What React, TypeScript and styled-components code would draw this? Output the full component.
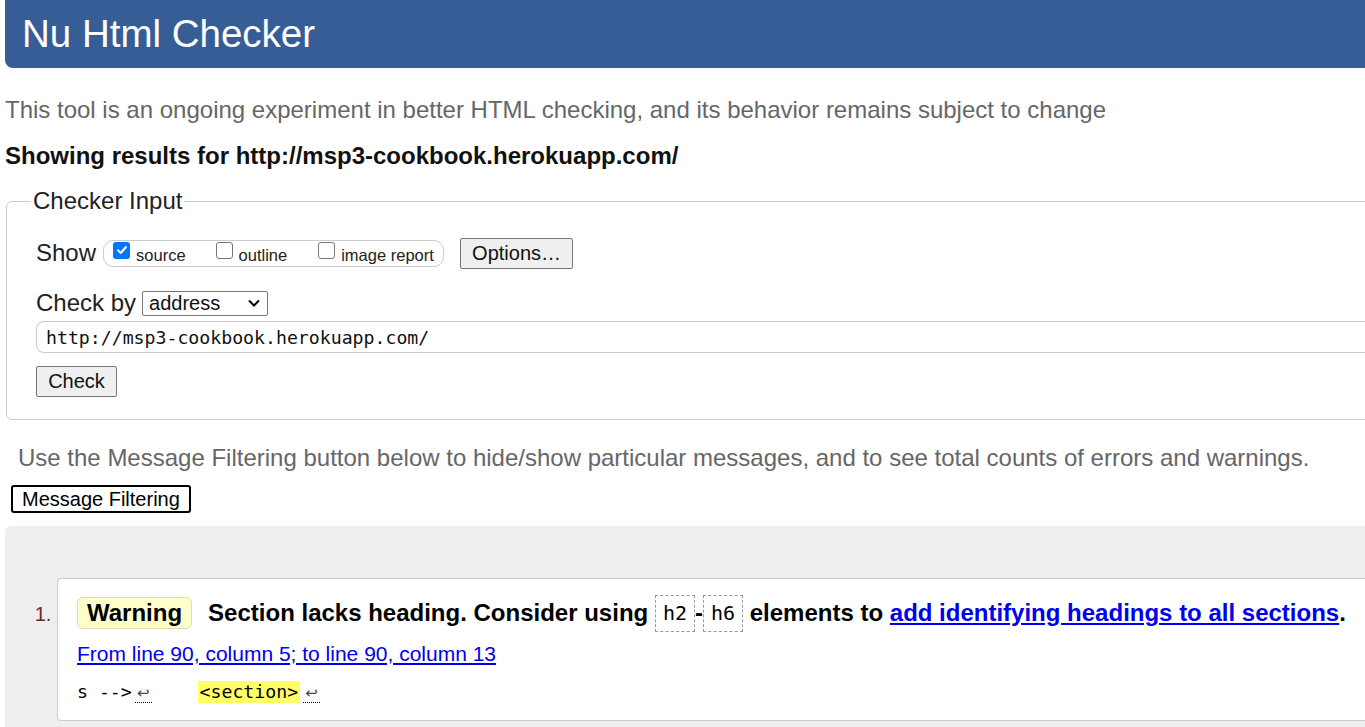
import React from "react";
import styled, { createGlobalStyle } from "styled-components";

const Global = createGlobalStyle`
  html, body { margin: 0; padding: 0; background: #fff; overflow: hidden; }
  body { font-family: "Liberation Sans", Arial, sans-serif; color: #000; }
`;

const Page = styled.div`
  width: 1420px;
  padding: 0 0 0 5px;
`;

const Header = styled.h1`
  margin: 0;
  background: #365d95;
  color: #fff;
  font-weight: normal;
  font-size: 38.5px;
  line-height: 68px;
  height: 68px;
  padding-left: 17px;
  border-radius: 0 0 0 8px;
`;

const Intro = styled.p`
  margin: 28px 0 0 0;
  color: #666;
  font-size: 24px;
  line-height: 28px;
`;

const Showing = styled.p`
  margin: 18px 0 0 0;
  font-weight: bold;
  font-size: 24px;
  line-height: 28px;
  color: #111;
`;

const Fieldset = styled.fieldset`
  margin: 17px 0 0 1px;
  border: 1px solid #ccc;
  border-radius: 6px;
  padding: 0 0 22px 29px;
  min-width: 0;
`;

const Legend = styled.legend`
  font-size: 24px;
  line-height: 28px;
  padding: 0 2px;
  margin-left: -5px;
  color: #222;
`;

const Row = styled.div`
  display: flex;
  align-items: center;
  font-size: 24px;
  color: #222;
`;

const ShowRow = styled(Row)`
  margin-top: 21px;
  height: 34px;
`;

const CheckGroup = styled.div`
  display: flex;
  align-items: center;
  margin-left: 7px;
  height: 27px;
  width: 341px;
  border: 1px solid #ccc;
  border-radius: 10px;
  box-sizing: border-box;
  padding-left: 9px;
`;

const CheckLabel = styled.label<{ gap?: number }>`
  display: flex;
  align-items: center;
  font-size: 16.5px;
  margin-right: ${(p) => p.gap ?? 0}px;
  color: #222;
  padding-top: 4px;
`;

const Box = styled.span<{ checked?: boolean }>`
  flex: none;
  width: 17px;
  height: 17px;
  box-sizing: border-box;
  border-radius: 3px;
  margin-right: 6px;
  margin-top: -10px;
  display: inline-flex;
  align-items: center;
  justify-content: center;
  border: ${(p) => (p.checked ? "none" : "1.5px solid #767676")};
  background: ${(p) => (p.checked ? "#0075ff" : "#fff")};
`;

const Button = styled.button`
  font-family: "Liberation Sans", Arial, sans-serif;
  font-size: 20px;
  color: #111;
  background: #efefef;
  border: 1px solid #767676;
  border-radius: 2px;
  padding: 0 11px;
  height: 31px;
`;

const OptionsButton = styled(Button)`
  margin-left: 16px;
  width: 113px;
`;

const CheckByRow = styled(Row)`
  margin-top: 16px;
  height: 34px;
`;

const Select = styled.div`
  margin-left: 6px;
  width: 126px;
  height: 25px;
  box-sizing: border-box;
  border: 1px solid #767676;
  border-radius: 2px;
  display: flex;
  align-items: center;
  justify-content: space-between;
  padding: 0 6px 0 6px;
  font-size: 20px;
  color: #111;
`;

const UrlInput = styled.div`
  margin-top: 1px;
  height: 32px;
  box-sizing: border-box;
  border: 1px solid #ccc;
  border-right: none;
  border-radius: 8px 0 0 8px;
  display: flex;
  align-items: center;
  padding-left: 9px;
  font-family: "DejaVu Sans Mono", "Liberation Mono", monospace;
  font-size: 18.2px;
  color: #111;
`;

const CheckButton = styled(Button)`
  margin-top: 13px;
  display: block;
  width: 81px;
  padding: 0;
`;

const FilterNote = styled.p`
  margin: 24px 0 0 13px;
  color: #666;
  font-size: 24px;
  line-height: 28px;
`;

const FilterButton = styled.button`
  margin: 13px 0 0 6px;
  font-family: "Liberation Sans", Arial, sans-serif;
  font-size: 20px;
  color: #000;
  background: #fff;
  border: 2px solid #000;
  border-radius: 3px;
  height: 28px;
  padding: 0 9px;
  display: block;
`;

const Results = styled.div`
  margin-top: 13px;
  background: #eee;
  border-radius: 6px 0 0 0;
  padding: 52px 0 20px 0;
`;

const List = styled.ol`
  margin: 0;
  padding-left: 52px;
  font-size: 20px;
`;

const Item = styled.li`
  color: #633;
  &::marker { color: #6b2a2a; }
`;

const Card = styled.div`
  background: #fff;
  border: 1px solid #ccc;
  border-right: none;
  border-radius: 4px 0 0 4px;
  padding: 15px 0 17px 19px;
  color: #000;
`;

const MessageLine = styled.p`
  margin: 0;
  font-size: 24px;
  font-weight: bold;
  line-height: 37px;
  white-space: nowrap;
  color: #000;
`;

const Badge = styled.strong`
  display: inline-block;
  vertical-align: middle;
  background: #ffc;
  border: 1px solid #dda;
  border-radius: 6px;
  padding: 0 9px;
  line-height: 30px;
  margin: -4px 16px 0 0;
`;

const CodeBox = styled.code`
  display: inline-block;
  vertical-align: middle;
  margin-top: -3px;
  font-family: "DejaVu Sans Mono", "Liberation Mono", monospace;
  font-weight: normal;
  font-size: 20px;
  border: 1px dashed #999;
  padding: 0 7px;
  line-height: 35px;
`;

const Link = styled.a`
  color: #00e;
  text-decoration: underline;
`;

const Location = styled.p`
  margin: 9px 0 0 0;
  font-size: 21px;
  line-height: 26px;
`;

const Extract = styled.p`
  margin: 14px 0 0 0;
  font-family: "DejaVu Sans Mono", "Liberation Mono", monospace;
  font-size: 18.2px;
  line-height: 22px;
  white-space: pre;
  color: #000;
`;

const Lf = styled.span`
  display: inline-block;
  width: 17px;
  margin-left: 3px;
  text-align: center;
  border-bottom: 1px dotted #000;
  line-height: 18px;
  font-family: "DejaVu Sans", sans-serif;
  font-size: 15px;
  color: #444;
`;

const Mark = styled.mark`
  display: inline-block;
  margin-left: 2px;
  background: #ff6;
  color: #000;
  padding: 0 2px;
`;

function CheckIcon() {
  return (
    <svg width="12" height="12" viewBox="0 0 12 12">
      <path d="M2 6.2 L4.8 9 L10 3" stroke="#fff" strokeWidth="2" fill="none" strokeLinecap="round" strokeLinejoin="round" />
    </svg>
  );
}

function Chevron() {
  return (
    <svg width="14" height="10" viewBox="0 0 14 10">
      <path d="M2 2.5 L7 7.5 L12 2.5" stroke="#000" strokeWidth="2" fill="none" />
    </svg>
  );
}

export default function App() {
  return (
    <>
      <Global />
      <Page>
        <Header>Nu Html Checker</Header>
        <Intro>This tool is an ongoing experiment in better HTML checking, and its behavior remains subject to change</Intro>
        <Showing>Showing results for http://msp3-cookbook.herokuapp.com/</Showing>
        <Fieldset>
          <Legend>Checker Input</Legend>
          <ShowRow>
            Show
            <CheckGroup>
              <CheckLabel gap={30}>
                <Box checked><CheckIcon /></Box>source
              </CheckLabel>
              <CheckLabel gap={31}>
                <Box />outline
              </CheckLabel>
              <CheckLabel>
                <Box />image report
              </CheckLabel>
            </CheckGroup>
            <OptionsButton>Options…</OptionsButton>
          </ShowRow>
          <CheckByRow>
            Check by
            <Select>
              address
              <Chevron />
            </Select>
          </CheckByRow>
          <UrlInput>http://msp3-cookbook.herokuapp.com/</UrlInput>
          <CheckButton>Check</CheckButton>
        </Fieldset>
        <FilterNote>Use the Message Filtering button below to hide/show particular messages, and to see total counts of errors and warnings.</FilterNote>
        <FilterButton>Message Filtering</FilterButton>
        <Results>
          <List>
            <Item>
              <Card>
                <MessageLine>
                  <Badge>Warning</Badge>
                  Section lacks heading. Consider using <CodeBox>h2</CodeBox>-<CodeBox>h6</CodeBox> elements to <Link href="#">add identifying headings to all sections</Link>.
                </MessageLine>
                <Location>
                  <Link href="#">From line 90, column 5; to line 90, column 13</Link>
                </Location>
                <Extract>
                  {"s -->"}<Lf>↩</Lf>{"    "}<Mark>{"<section>"}</Mark><Lf>↩</Lf>
                </Extract>
              </Card>
            </Item>
          </List>
        </Results>
      </Page>
    </>
  );
}
